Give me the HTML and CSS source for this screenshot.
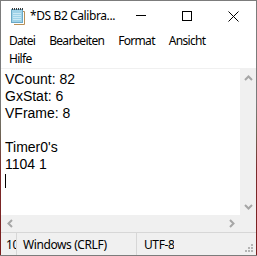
FILE: index.html
```html
<!DOCTYPE html>
<html lang="de">
<head>
<meta charset="utf-8">
<title>Notepad</title>
<link rel="stylesheet" href="styles.css">
</head>
<body>
<div class="win">
  <div class="titlebar">
    <svg class="appicon" width="16" height="18" viewBox="0 0 16 18">
      <path d="M4 4.5 H14.5 V17.5 H4" fill="none" stroke="#b89058" stroke-width="1"/>
      <rect x="1.5" y="2.5" width="11" height="13" fill="#9fd2e8" stroke="#6aa9c6"/>
      <g stroke="#c9e9f5" stroke-width="1">
        <line x1="3" y1="6.5" x2="11" y2="6.5"/>
        <line x1="3" y1="8.5" x2="11" y2="8.5"/>
        <line x1="3" y1="10.5" x2="11" y2="10.5"/>
        <line x1="3" y1="12.5" x2="11" y2="12.5"/>
      </g>
      <g fill="#3a3a3a">
        <rect x="2" y="1" width="1" height="2"/>
        <rect x="4" y="1" width="1" height="2"/>
        <rect x="6" y="1" width="1" height="2"/>
        <rect x="8" y="1" width="1" height="2"/>
        <rect x="10" y="1" width="1" height="2"/>
        <rect x="12" y="1" width="1" height="2"/>
      </g>
    </svg>
    <span class="title">*DS B2 Calibra...</span>
    <div class="caps">
      <span class="cap"><svg width="10" height="10" viewBox="0 0 10 10"><line x1="0" y1="4.5" x2="10" y2="4.5" stroke="#000"/></svg></span>
      <span class="cap"><svg width="10" height="10" viewBox="0 0 10 10"><rect x="0.5" y="0.5" width="9" height="9" fill="none" stroke="#000"/></svg></span>
      <span class="cap"><svg width="11" height="11" viewBox="0 0 11 11"><path d="M0.5 0.5 L10.5 10.5 M10.5 0.5 L0.5 10.5" stroke="#000" stroke-width="1"/></svg></span>
    </div>
  </div>
  <div class="menubar">
    <span class="mi">Datei</span>
    <span class="mi">Bearbeiten</span>
    <span class="mi">Format</span>
    <span class="mi">Ansicht</span>
    <span class="mi">Hilfe</span>
  </div>
  <div class="editor">
    <div class="editrow">
      <div class="text">
        <div class="ln">VCount: 82</div>
        <div class="ln">GxStat: 6</div>
        <div class="ln">VFrame: 8</div>
        <div class="ln"></div>
        <div class="ln">Timer0's</div>
        <div class="ln">1104 1</div>
        <div class="ln"><span class="caret"></span></div>
      </div>
      <div class="vscroll">
        <span class="sbtn"><svg width="9" height="6" viewBox="0 0 9 6"><path d="M1 5 L4.5 1.5 L8 5" fill="none" stroke="#a6a6a6" stroke-width="2"/></svg></span>
        <span class="sbtn"><svg width="9" height="6" viewBox="0 0 9 6"><path d="M1 1 L4.5 4.5 L8 1" fill="none" stroke="#a6a6a6" stroke-width="2"/></svg></span>
      </div>
    </div>
    <div class="hrow">
      <div class="hscroll">
        <span class="sbtn h"><svg width="6" height="9" viewBox="0 0 6 9"><path d="M5 1 L1.5 4.5 L5 8" fill="none" stroke="#a6a6a6" stroke-width="2"/></svg></span>
        <span class="sbtn h"><svg width="6" height="9" viewBox="0 0 6 9"><path d="M1 1 L4.5 4.5 L1 8" fill="none" stroke="#a6a6a6" stroke-width="2"/></svg></span>
      </div>
      <div class="corner"></div>
    </div>
  </div>
  <div class="status">
    <span class="cell c1">100%</span>
    <span class="cell c2">Windows (CRLF)</span>
    <span class="cell c3">UTF-8</span>
    <span class="grip">
      <svg width="8" height="8" viewBox="0 0 8 8" fill="#b4b4b4">
        <rect x="6" y="0" width="2" height="2"/>
        <rect x="3" y="3" width="2" height="2"/><rect x="6" y="3" width="2" height="2"/>
        <rect x="0" y="6" width="2" height="2"/><rect x="3" y="6" width="2" height="2"/><rect x="6" y="6" width="2" height="2"/>
      </svg>
    </span>
  </div>
</div>
</body>
</html>
```
FILE: styles.css
```css
html, body {
  margin: 0;
  padding: 0;
}
body {
  width: 257px;
  height: 256px;
  padding: 1px;
  box-sizing: border-box;
  overflow: hidden;
  background:
    linear-gradient(#7c7c7c, #7c7c7c) left bottom / 100% 1px no-repeat,
    linear-gradient(to bottom, #7c7c7c 0%, #7a7a7a 40%, #6e6656 52%, #7a2c2c 66%, #7b1c1c 100%);
}
.win {
  width: 255px;
  height: 254px;
  background: #fff;
  display: flex;
  flex-direction: column;
  font-family: "Noto Sans", "Liberation Sans", sans-serif;
  font-size: 12px;
  letter-spacing: -0.4px;
  color: #000;
  overflow: hidden;
}
.titlebar {
  height: 30px;
  flex: none;
  display: flex;
  align-items: center;
}
.appicon {
  margin-left: 9px;
  margin-right: 4px;
  margin-top: -1px;
}
.title {
  flex: 1;
  white-space: nowrap;
  margin-top: -1px;
}
.caps {
  display: flex;
  height: 30px;
}
.cap {
  width: 46px;
  height: 30px;
  display: flex;
  align-items: center;
  justify-content: center;
}
.menubar {
  flex: none;
  height: 37px;
  padding: 1px 24px 0 1px;
  box-sizing: border-box;
  display: flex;
  flex-wrap: wrap;
  align-content: flex-start;
}
.mi {
  padding: 0 7px;
  line-height: 18px;
  letter-spacing: -0.7px;
  white-space: nowrap;
}
.editor {
  flex: none;
  border-top: 1px solid #f0f0f0;
  display: flex;
  flex-direction: column;
}
.editrow {
  display: flex;
  height: 146px;
}
.text {
  flex: 1;
  padding: 2px 0 0 4px;
  font-family: "Liberation Sans", Arial, sans-serif;
  font-size: 14px;
  letter-spacing: 0;
  line-height: 17px;
}
.ln {
  height: 17px;
  white-space: pre;
}
.caret {
  display: inline-block;
  width: 1px;
  height: 14px;
  background: #000;
  vertical-align: -2px;
}
.vscroll {
  width: 16px;
  background: #f0f0f0;
  display: flex;
  flex-direction: column;
  justify-content: space-between;
}
.sbtn {
  width: 16px;
  height: 17px;
  display: flex;
  align-items: center;
  justify-content: center;
}
.sbtn.h {
  width: 17px;
  height: 17px;
}
.hrow {
  display: flex;
  height: 17px;
}
.hscroll {
  flex: 1;
  background: #f0f0f0;
  display: flex;
  justify-content: space-between;
}
.corner {
  width: 16px;
  background: #f0f0f0;
}
.status {
  flex: 1;
  background: #f0f0f0;
  border-top: 1px solid #d7d7d7;
  display: flex;
  align-items: center;
  position: relative;
}
.cell {
  height: 100%;
  display: flex;
  align-items: center;
  white-space: nowrap;
  overflow: hidden;
  box-sizing: border-box;
}
.c1 {
  width: 15px;
  padding-left: 5px;
}
.c2 {
  width: 120px;
  padding-left: 6px;
  border-left: 1px solid #d7d7d7;
}
.c3 {
  padding-left: 7px;
  border-left: 1px solid #d7d7d7;
}
.grip {
  position: absolute;
  right: 3px;
  bottom: 3px;
  width: 8px;
  height: 8px;
  display: flex;
}
```
